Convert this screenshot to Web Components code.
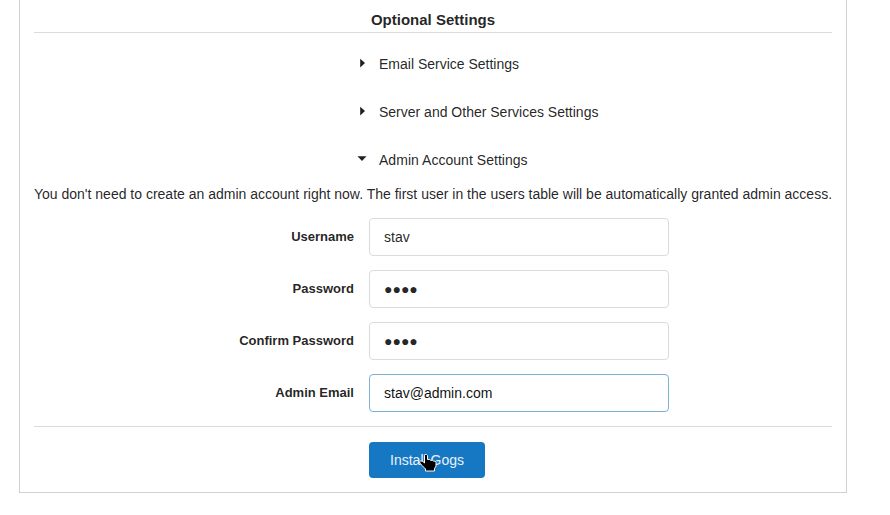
<!DOCTYPE html>
<html lang="en"><head><meta charset="utf-8"><title>Install Gogs</title>
<style>body{margin:0;background:#fff;font:14px/20px "Liberation Sans",Arial,sans-serif;color:rgba(0,0,0,.87)}</style></head>
<body>
<install-panel>
<optional-heading>Optional Settings</optional-heading>
<settings-toggle>Email Service Settings</settings-toggle>
<settings-toggle>Server and Other Services Settings</settings-toggle>
<settings-toggle open>Admin Account Settings</settings-toggle>
<help-text>You don't need to create an admin account right now. The first user in the users table will be automatically granted admin access.</help-text>
<form-field label="Username">stav</form-field>
<form-field label="Password">●●●●</form-field>
<form-field label="Confirm Password">●●●●</form-field>
<form-field label="Admin Email" focused>stav@admin.com</form-field>
<section-divider></section-divider>
<install-button>Install Gogs</install-button>
</install-panel>
<script>
const define=(name,html)=>customElements.define(name,class extends HTMLElement{
connectedCallback(){const r=this.attachShadow({mode:'open'});r.innerHTML=html;const l=r.querySelector('.label');if(l)l.textContent=this.getAttribute('label');}});
define('install-panel','<style>:host{display:block;box-sizing:border-box;margin-left:19px;width:828px;height:493px;border:1px solid #d0d0d1;border-top:0;padding:0 14px}</style><slot></slot>');
define('optional-heading','<style>:host{display:block;box-sizing:border-box;height:33px;padding-top:10px;border-bottom:1px solid #dbdbdc;text-align:center;font-size:15px;font-weight:700;line-height:20px;margin-bottom:7px}</style><slot></slot>');
define('settings-toggle','<style>:host{display:flex;height:48px;align-items:center;padding-left:323px}:host([open]){letter-spacing:.035px}svg{width:12px;height:12px;margin-right:10px;flex:none}.down{display:none}:host([open]) .down{display:block}:host([open]) .right{display:none}</style><svg class="right" viewBox="0 0 12 12"><path d="M3.2.7v8.8L8 5z" fill="#202020"/></svg><svg class="down" viewBox="0 0 12 12"><path d="M.5 2.2h9L5 6.9z" fill="#202020"/></svg><slot></slot>');
define('help-text','<style>:host{display:block;height:34px;white-space:nowrap}</style><slot></slot>');
define('form-field','<style>:host{display:flex;height:38px;margin-bottom:14px}.label{width:320px;margin-right:15px;text-align:right;font-size:13px;line-height:37px;font-weight:700}.input{box-sizing:border-box;width:300px;border:1px solid #dbdbdc;border-radius:4px;padding:0 14px;line-height:36px}:host([focused]) .input{border-color:#7cb2d6;color:rgba(0,0,0,.95)}</style><div class="label"></div><div class="input"><slot></slot></div>');
define('section-divider','<style>:host{display:block;height:1px;background:#dbdbdc;margin-bottom:15px}</style>');
define('install-button','<style>:host{display:block;position:relative;box-sizing:border-box;margin-left:335px;width:116px;height:36px;background:#1678c2;color:#e8f2f9;border-radius:4px;text-align:center;line-height:36px}svg{position:absolute;left:50px;top:12px;width:18px;height:18px}</style><slot></slot><svg viewBox="0 0 18 18"><path d="M5.5 1.5l1-1h1l1 1v4h2l1 .8h2l1 .8h1.5l1 1v4l-1.5 2.4v2.5h-9V15L3 11.5.8 9V7.5l1-.7 2 .7 1.7 1.5z" fill="#000" stroke="#fff" stroke-linejoin="round"/></svg>');
</script></body></html>
